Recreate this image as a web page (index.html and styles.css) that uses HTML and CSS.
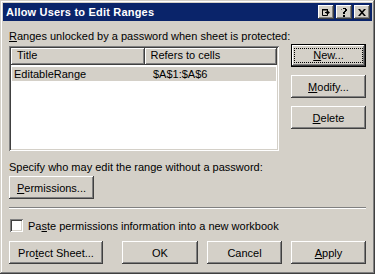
FILE: index.html
```html
<!DOCTYPE html>
<html lang="en">
<head>
  <meta charset="UTF-8" />
  <title>Allow Users to Edit Ranges</title>
  <link rel="stylesheet" href="styles.css">
</head>
<body>

  <div class="window">
    <div class="titlebar">
      <span class="title">Allow Users to Edit Ranges</span>
      <div class="title-buttons">
        <span class="tbtn">
          <svg width="8" height="7" viewBox="0 0 8 7">
            <path d="M0.5 0.5h5v6h-5z" fill="none" stroke="#000"/>
            <path d="M0 0h6v1.5h-6z" fill="#000"/>
            <path d="M3 3.5h3M5 2v3M6 2.5v2" stroke="#000" fill="none"/>
            <path d="M6 2l2 1.5-2 1.5z" fill="#000"/>
          </svg>
        </span>
        <span class="tbtn">
          <svg width="7" height="9" viewBox="0 0 7 9">
            <path d="M1 1h1v-1h3v1h1v2h-1v1h-1v2h-2v-2h1v-1h1v-2h-3v1h-1z" fill="#000"/>
            <path d="M2 7h2v2h-2z" fill="#000"/>
          </svg>
        </span>
        <span class="tbtn close">
          <svg width="8" height="7" viewBox="0 0 8 7">
            <path d="M0 0h2l2 2.2 2-2.2h2l-3 3.5 3 3.5h-2l-2-2.2-2 2.2h-2l3-3.5z" fill="#000"/>
          </svg>
        </span>
      </div>
    </div>

    <div class="content">
      <div class="main">
        <div class="left">
          <div class="label"><u>R</u>anges unlocked by a password when sheet is protected:</div>
          <div class="listbox">
            <div class="header">
              <div class="col col-title">Title</div>
              <div class="col col-ref">Refers to cells</div>
              <div class="col col-rest"></div>
            </div>
            <div class="row selected">
              <span class="cell cell-title">EditableRange</span>
              <span class="cell">$A$1:$A$6</span>
            </div>
          </div>
        </div>
        <div class="side">
          <button class="btn default"><span class="focus"><u>N</u>ew...</span></button>
          <button class="btn"><u>M</u>odify...</button>
          <button class="btn"><u>D</u>elete</button>
        </div>
      </div>

      <div class="label specify">Specify who may edit the range without a password:</div>
      <button class="btn permissions"><u>P</u>ermissions...</button>

      <div class="separator"></div>

      <label class="check-row">
        <span class="checkbox"></span>
        <span>Pa<u>s</u>te permissions information into a new workbook</span>
      </label>

      <div class="footer">
        <button class="btn protect">Pro<u>t</u>ect Sheet...</button>
        <button class="btn ok">OK</button>
        <button class="btn">Cancel</button>
        <button class="btn"><u>A</u>pply</button>
      </div>
    </div>
  </div>

</body>
</html>
```

FILE: styles.css
```css
body {
  margin: 0;
  padding: 0;
  background-color: #d4d0c8;
  font-family: "Liberation Sans", Arial, sans-serif;
  font-size: 11px;
  color: #000;
}
.window {
  width: 375px;
  height: 274px;
  box-sizing: border-box;
  padding: 3px;
  background-color: #d4d0c8;
  box-shadow: inset -1px -1px #404040, inset 1px 1px #d4d0c8,
              inset -2px -2px #808080, inset 2px 2px #fff;
}
.titlebar {
  height: 18px;
  background-color: #0a246a;
  display: flex;
  align-items: center;
  justify-content: space-between;
  padding: 0 2px 0 3px;
}
.title {
  color: #fff;
  font-weight: bold;
  font-size: 11px;
  letter-spacing: 0.2px;
}
.title-buttons {
  display: flex;
  gap: 2px;
}
.tbtn {
  width: 16px;
  height: 14px;
  box-sizing: border-box;
  background-color: #d4d0c8;
  display: flex;
  align-items: center;
  justify-content: center;
  box-shadow: inset -1px -1px #404040, inset 1px 1px #fff,
              inset -2px -2px #808080, inset 2px 2px #d4d0c8;
}
.content {
  padding: 0 0 0 6px;
}
.main {
  display: flex;
  align-items: flex-start;
}
.left {
  padding-top: 9px;
  width: 270px;
}
.label {
  height: 13px;
  line-height: 13px;
  white-space: nowrap;
}
.listbox {
  margin-top: 3px;
  height: 105px;
  box-sizing: border-box;
  padding: 2px;
  background-color: #fff;
  box-shadow: inset 1px 1px #808080, inset -1px -1px #fff,
              inset 2px 2px #404040, inset -2px -2px #d4d0c8;
}
.header {
  display: flex;
  height: 17px;
}
.col {
  box-sizing: border-box;
  height: 17px;
  line-height: 15px;
  padding-left: 6px;
  background-color: #d4d0c8;
  box-shadow: inset -1px -1px #404040, inset 1px 1px #fff,
              inset -2px -2px #808080;
}
.col-title {
  width: 134px;
}
.col-ref {
  width: 133px;
}
.col-rest {
  flex: 1;
  padding: 0;
}
.row {
  display: flex;
  height: 14px;
  line-height: 14px;
  margin: 2px 1px 0 1px;
}
.row.selected {
  background-color: #d4d0c8;
}
.cell {
  padding-left: 2px;
}
.cell-title {
  width: 137px;
}
.side {
  display: flex;
  flex-direction: column;
  padding-top: 23px;
  margin-left: 12px;
  gap: 8px;
}
.btn {
  width: 75px;
  height: 23px;
  box-sizing: border-box;
  border: none;
  padding: 0;
  background-color: #d4d0c8;
  font-family: "Liberation Sans", Arial, sans-serif;
  font-size: 11px;
  color: #000;
  box-shadow: inset -1px -1px #404040, inset 1px 1px #fff,
              inset -2px -2px #808080, inset 2px 2px #d4d0c8;
}
.btn.default {
  border: 1px solid #000;
  box-shadow: inset -1px -1px #404040, inset 1px 1px #fff,
              inset -2px -2px #808080;
}
.focus {
  display: block;
  margin: 3px;
  height: 13px;
  line-height: 13px;
  outline: 1px dotted #000;
}
.specify {
  margin-top: 10px;
}
.permissions {
  width: 85px;
  margin-top: 2px;
  display: block;
}
.separator {
  width: 357px;
  margin-top: 8px;
  border-top: 1px solid #808080;
  border-bottom: 1px solid #fff;
}
.check-row {
  display: flex;
  align-items: center;
  margin-top: 10px;
  margin-left: 1px;
  height: 13px;
  gap: 5px;
}
.checkbox {
  width: 13px;
  height: 13px;
  box-sizing: border-box;
  background-color: #fff;
  box-shadow: inset 1px 1px #808080, inset -1px -1px #fff,
              inset 2px 2px #404040, inset -2px -2px #d4d0c8;
}
.footer {
  display: flex;
  margin-top: 9px;
  gap: 9px;
}
.protect {
  width: 94px;
}
.ok {
  margin-left: 10px;
  width: 76px;
}
```
